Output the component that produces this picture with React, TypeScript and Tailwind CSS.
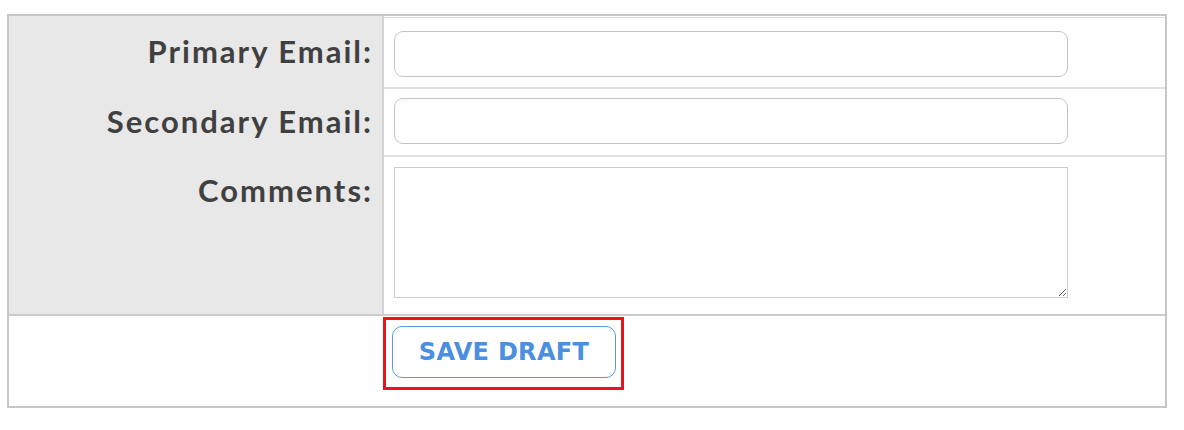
import React from "react";

export default function App() {
  const label = "flex justify-end pr-[9px] text-[31px] font-bold text-[#404040] leading-none tracking-[2px]";
  return (
    <div className="w-[1184px] h-[430px] bg-white pt-[14px] pl-[7px]" style={{ fontFamily: "Lato, 'Noto Sans', sans-serif" }}>
      <div className="w-[1160px] h-[394px] border-2 border-[#c6c6c6] flex flex-col">
        <div className="flex h-[300px] border-b-2 border-[#cccccc]">
          <div className="w-[375px] bg-[#e8e8e8] border-r-2 border-[#d4d4d4] flex flex-col">
            <div className={label + " h-[72px] items-center pb-[2px]"}>Primary Email:</div>
            <div className={label + " h-[68px] items-center pb-[2px]"}>Secondary Email:</div>
            <div className={label + " flex-1 items-start pt-[19px]"}>Comments:</div>
          </div>
          <div className="flex-1 flex flex-col border-t border-[#dddddd] mt-[1px]">
            <div className="h-[71px] border-b-2 border-[#e0e0e0] pl-[10px] pt-[13px]">
              <input className="block w-[674px] h-[46px] rounded-[9px] border-[1.5px] border-[#c4c4c4] bg-white outline-none" />
            </div>
            <div className="h-[68px] border-b-2 border-[#e0e0e0] pl-[10px] pt-[9px]">
              <input className="block w-[674px] h-[46px] rounded-[9px] border-[1.5px] border-[#c4c4c4] bg-white outline-none" />
            </div>
            <div className="flex-1 pl-[10px] pt-[10px]">
              <textarea className="block w-[674px] h-[131px] border-[1.5px] border-[#cccccc] bg-white outline-none resize" />
            </div>
          </div>
        </div>
        <div className="flex-1 pl-[374px] pt-[1px]">
          <div className="w-[241px] h-[73px] border-[3px] border-[#e8141c] pl-[6px] pt-[6px]">
            <button className="w-[224px] h-[52px] rounded-[10px] border-[1.5px] border-[#5a9ae0] bg-white text-[#4a8fe0] text-[24px] font-bold tracking-[0.3px]" style={{ fontFamily: "'DejaVu Sans', sans-serif" }}>
              SAVE DRAFT
            </button>
          </div>
        </div>
      </div>
    </div>
  );
}
